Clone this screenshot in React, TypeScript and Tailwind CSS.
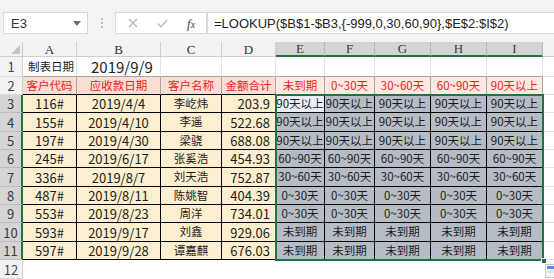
import React from 'react';

const COLS = ['A', 'B', 'C', 'D', 'E', 'F', 'G', 'H', 'I'];
const W = ['w-[54px]', 'w-[84px]', 'w-[61px]', 'w-[54px]', 'w-[49px]', 'w-[50px]', 'w-[56px]', 'w-[56px]', 'w-[56px]'];
const ROW_H = ['h-[18px]', 'h-[19px]', 'h-[18px]', 'h-[18px]', 'h-[19px]', 'h-[18px]', 'h-[18px]', 'h-[19px]', 'h-[18px]'];

const headers = ['客户代码', '应收款日期', '客户名称', '金额合计', '未到期', '0~30天', '30~60天', '60~90天', '90天以上'];

const rows: [string, string, string, string, string][] = [
  ['116#', '2019/4/4', '李屹炜', '203.9', '90天以上'],
  ['155#', '2019/4/10', '李遥', '522.68', '90天以上'],
  ['197#', '2019/4/30', '梁骁', '688.08', '90天以上'],
  ['245#', '2019/6/17', '张奚浩', '454.93', '60~90天'],
  ['336#', '2019/8/7', '刘天浩', '752.87', '30~60天'],
  ['487#', '2019/8/11', '陈姚智', '404.39', '0~30天'],
  ['553#', '2019/8/23', '周洋', '734.01', '0~30天'],
  ['593#', '2019/9/17', '刘鑫', '929.06', '未到期'],
  ['597#', '2019/9/28', '谭嘉麒', '676.03', '未到期'],
];

const font = { fontFamily: '"Noto Sans CJK SC", "Noto Sans", sans-serif' };

const RowHead = ({ n, h, sel }: { n: number; h: string; sel?: boolean }) => (
  <div
    className={`w-[23px] shrink-0 ${h} flex items-center justify-center text-[13px] leading-none border-b ${
      sel ? 'bg-[#d4d4d4] text-[#3b3b3b] border-r-2 border-r-[#217346] border-b-[#bdbdbd]' : 'bg-[#f2f2f2] text-[#444] border-r border-r-[#cfcfcf] border-b-[#dadada]'
    }`}
  >
    {n}
  </div>
);

export default function App() {
  return (
    <div className="w-[554px] h-[279px] overflow-hidden bg-white text-black" style={font}>
      {/* formula bar */}
      <div className="h-[42px] bg-[#f3f3f3] flex items-start pt-[12px] pl-[3px]">
        <div className="w-[85px] h-[22px] bg-white border border-[#d9d9d9] flex items-center justify-between pl-[7px] pr-[6px]">
          <span className="text-[13px] leading-none text-[#333]" style={{ fontFamily: '"Liberation Sans", sans-serif' }}>E3</span>
          <svg width="8" height="5" viewBox="0 0 8 5"><path d="M0 0h8L4 5z" fill="#707070" /></svg>
        </div>
        <div className="w-[27px] h-[22px] flex flex-col items-center justify-center gap-[2px]">
          <span className="w-[2px] h-[2px] bg-[#c2c2c2]" />
          <span className="w-[2px] h-[2px] bg-[#c2c2c2]" />
          <span className="w-[2px] h-[2px] bg-[#c2c2c2]" />
        </div>
        <div className="w-[92px] h-[22px] bg-white border border-[#d9d9d9] flex items-center pl-[12px] gap-[19px]">
          <svg width="10" height="10" viewBox="0 0 10 10"><path d="M1 1l8 8M9 1L1 9" stroke="#b8b8b8" strokeWidth="1.3" /></svg>
          <svg width="11" height="9" viewBox="0 0 11 9"><path d="M1 4.5l3 3.3L10 1" stroke="#b8b8b8" strokeWidth="1.3" fill="none" /></svg>
          <span className="text-[13px] italic text-[#444] leading-none" style={{ fontFamily: '"Liberation Serif", serif' }}>
            f<span className="text-[10px]">x</span>
          </span>
        </div>
        <div className="flex-1 h-[22px] bg-white border border-[#d9d9d9] border-r-0 flex items-center pl-[6px] text-[13px] leading-none text-[#222] whitespace-nowrap" style={{ fontFamily: '"Liberation Sans", sans-serif' }}>
          =LOOKUP($B$1-$B3,{'{'}-999,0,30,60,90{'}'},$E$2:$I$2)
        </div>
      </div>

      {/* sheet */}
      <div className="relative">
        {/* column headers */}
        <div className="flex h-[15px]" style={{ fontFamily: '"Liberation Serif", serif' }}>
          <div className="w-[23px] shrink-0 bg-[#f2f2f2] border-r border-b border-[#cfcfcf] relative">
            <svg className="absolute right-[2px] bottom-[2px]" width="9" height="9" viewBox="0 0 9 9"><path d="M9 0v9H0z" fill="#c4c4c4" /></svg>
          </div>
          {COLS.map((c, i) => (
            <div
              key={c}
              className={`${W[i]} shrink-0 flex items-center justify-center text-[13px] leading-none border-r ${
                i >= 4 ? 'bg-[#d4d4d4] text-[#3b3b3b] border-r-[#b8b8b8] border-b-2 border-b-[#217346]' : 'bg-[#f2f2f2] text-[#333] border-r-[#cfcfcf] border-b border-b-[#cfcfcf]'
              }`}
            >
              {c}
            </div>
          ))}
          <div className="flex-1 bg-[#f2f2f2] border-b border-[#cfcfcf]" />
        </div>

        {/* row 1 */}
        <div className="flex h-[20px]">
          <RowHead n={1} h="h-[20px]" />
          <div className="w-[54px] shrink-0 border-r border-r-[#e4e4e4] border-b border-b-[#a6a6a6] flex items-center pl-[5px] text-[11.5px] leading-none whitespace-nowrap text-[#222]">制表日期</div>
          <div className="w-[84px] shrink-0 border-r border-r-[#e4e4e4] border-b border-b-[#a6a6a6] flex items-center pl-[14px] text-[15px] leading-none text-[#222]">2019/9/9</div>
          {W.slice(2).map((w, i) => (
            <div key={i} className={`${w} shrink-0 border-r border-r-[#e4e4e4] border-b border-b-[#a6a6a6]`} />
          ))}
          <div className="flex-1 border-b border-[#e4e4e4]" />
        </div>

        {/* row 2 */}
        <div className="flex h-[18px]">
          <RowHead n={2} h="h-[18px]" />
          {headers.map((t, i) => (
            <div
              key={t}
              className={`${W[i]} shrink-0 flex items-center justify-center text-[11.5px] leading-none text-[#f01c24] whitespace-nowrap overflow-hidden border-r border-r-[#a6a6a6] border-b border-b-black ${
                i < 4 ? 'bg-[#fbddd4]' : 'bg-[#fde8e2]'
              }`}
            >
              {t}
            </div>
          ))}
          <div className="flex-1 border-b border-[#e4e4e4]" />
        </div>

        {/* data rows */}
        {rows.map((r, ri) => (
          <div key={ri} className={`flex ${ROW_H[ri]}`}>
            <RowHead n={ri + 3} h={ROW_H[ri]} sel />
            {r.slice(0, 4).map((v, ci) => (
              <div
                key={ci}
                className={`${W[ci]} shrink-0 bg-[#fcefcf] border-r border-b border-black flex items-center leading-none whitespace-nowrap overflow-hidden text-[#1c1c1c] ${
                  ci === 3 ? 'justify-end pr-[5px] text-[13px]' : ci === 2 ? 'justify-center text-[11.5px]' : 'justify-center text-[13px]'
                }`}
              >
                {v}
              </div>
            ))}
            {W.slice(4).map((w, ci) => (
              <div
                key={ci}
                className={`${w} shrink-0 border-r border-b border-black flex items-center justify-center leading-none whitespace-nowrap overflow-hidden text-[11.5px] text-[#1c1c1c] ${
                  ri === 0 && ci === 0 ? 'bg-[#e9eef8]' : 'bg-[#b5bcc6]'
                }`}
              >
                {r[4]}
              </div>
            ))}
            <div className="flex-1 border-b border-[#e4e4e4]" />
          </div>
        ))}

        {/* row 12 */}
        <div className="flex h-[19px]">
          <RowHead n={12} h="h-[19px]" />
          <div className="flex-1" />
        </div>

        {/* selection outline + fill handle */}
        <div className="absolute left-[275px] top-[52px] w-[269px] h-[167px] border-2 border-[#217346] pointer-events-none" />
        <div className="absolute left-[541px] top-[216px] w-[6px] h-[6px] bg-[#217346] border border-white" />
        <div className="absolute left-[545px] top-[222px] w-[11px] h-[14px] bg-[#f4f4f4] border border-[#c8c8c8] flex flex-col gap-[1px] p-[1px]">
          <span className="h-[3px] bg-[#5b8bd0]" />
          <span className="h-[3px] bg-[#e0e6ef]" />
        </div>
      </div>
    </div>
  );
}
